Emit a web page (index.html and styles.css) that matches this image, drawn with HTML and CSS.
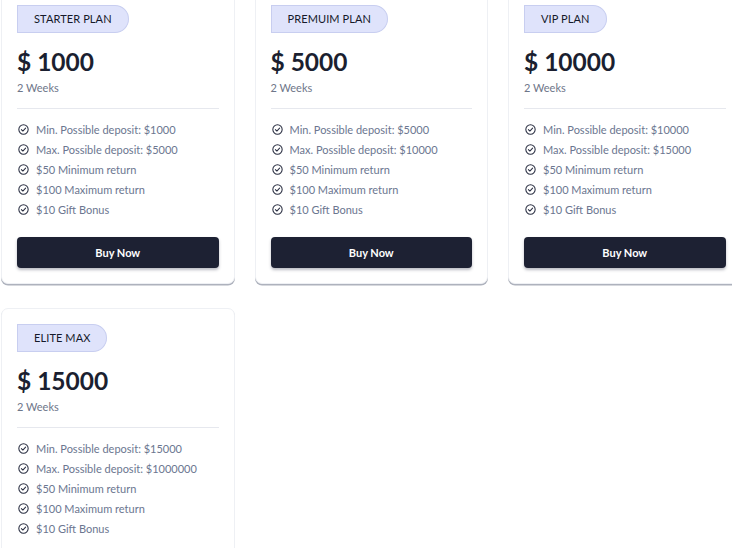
FILE: index.html
```html
<!DOCTYPE html>
<html lang="en">
<head>
<meta charset="utf-8">
<title>Plans</title>
<link rel="stylesheet" href="styles.css">
</head>
<body>
<div class="plans">
  <div class="card">
    <div class="badge">STARTER PLAN</div>
    <div class="price">$ 1000</div>
    <div class="period">2 Weeks</div>
    <hr class="divider">
    <ul class="features">
      <li><svg class="check" viewBox="0 0 12 12"><circle cx="6" cy="6" r="5.1"/><path d="M3.7 6.1l1.6 1.6 3-3.2"/></svg>Min. Possible deposit: $1000</li>
      <li><svg class="check" viewBox="0 0 12 12"><circle cx="6" cy="6" r="5.1"/><path d="M3.7 6.1l1.6 1.6 3-3.2"/></svg>Max. Possible deposit: $5000</li>
      <li><svg class="check" viewBox="0 0 12 12"><circle cx="6" cy="6" r="5.1"/><path d="M3.7 6.1l1.6 1.6 3-3.2"/></svg>$50 Minimum return</li>
      <li><svg class="check" viewBox="0 0 12 12"><circle cx="6" cy="6" r="5.1"/><path d="M3.7 6.1l1.6 1.6 3-3.2"/></svg>$100 Maximum return</li>
      <li><svg class="check" viewBox="0 0 12 12"><circle cx="6" cy="6" r="5.1"/><path d="M3.7 6.1l1.6 1.6 3-3.2"/></svg>$10 Gift Bonus</li>
    </ul>
    <button class="buy">Buy Now</button>
  </div>
  <div class="card">
    <div class="badge">PREMUIM PLAN</div>
    <div class="price">$ 5000</div>
    <div class="period">2 Weeks</div>
    <hr class="divider">
    <ul class="features">
      <li><svg class="check" viewBox="0 0 12 12"><circle cx="6" cy="6" r="5.1"/><path d="M3.7 6.1l1.6 1.6 3-3.2"/></svg>Min. Possible deposit: $5000</li>
      <li><svg class="check" viewBox="0 0 12 12"><circle cx="6" cy="6" r="5.1"/><path d="M3.7 6.1l1.6 1.6 3-3.2"/></svg>Max. Possible deposit: $10000</li>
      <li><svg class="check" viewBox="0 0 12 12"><circle cx="6" cy="6" r="5.1"/><path d="M3.7 6.1l1.6 1.6 3-3.2"/></svg>$50 Minimum return</li>
      <li><svg class="check" viewBox="0 0 12 12"><circle cx="6" cy="6" r="5.1"/><path d="M3.7 6.1l1.6 1.6 3-3.2"/></svg>$100 Maximum return</li>
      <li><svg class="check" viewBox="0 0 12 12"><circle cx="6" cy="6" r="5.1"/><path d="M3.7 6.1l1.6 1.6 3-3.2"/></svg>$10 Gift Bonus</li>
    </ul>
    <button class="buy">Buy Now</button>
  </div>
  <div class="card">
    <div class="badge">VIP PLAN</div>
    <div class="price">$ 10000</div>
    <div class="period">2 Weeks</div>
    <hr class="divider">
    <ul class="features">
      <li><svg class="check" viewBox="0 0 12 12"><circle cx="6" cy="6" r="5.1"/><path d="M3.7 6.1l1.6 1.6 3-3.2"/></svg>Min. Possible deposit: $10000</li>
      <li><svg class="check" viewBox="0 0 12 12"><circle cx="6" cy="6" r="5.1"/><path d="M3.7 6.1l1.6 1.6 3-3.2"/></svg>Max. Possible deposit: $15000</li>
      <li><svg class="check" viewBox="0 0 12 12"><circle cx="6" cy="6" r="5.1"/><path d="M3.7 6.1l1.6 1.6 3-3.2"/></svg>$50 Minimum return</li>
      <li><svg class="check" viewBox="0 0 12 12"><circle cx="6" cy="6" r="5.1"/><path d="M3.7 6.1l1.6 1.6 3-3.2"/></svg>$100 Maximum return</li>
      <li><svg class="check" viewBox="0 0 12 12"><circle cx="6" cy="6" r="5.1"/><path d="M3.7 6.1l1.6 1.6 3-3.2"/></svg>$10 Gift Bonus</li>
    </ul>
    <button class="buy">Buy Now</button>
  </div>
  <div class="card">
    <div class="badge">ELITE MAX</div>
    <div class="price">$ 15000</div>
    <div class="period">2 Weeks</div>
    <hr class="divider">
    <ul class="features">
      <li><svg class="check" viewBox="0 0 12 12"><circle cx="6" cy="6" r="5.1"/><path d="M3.7 6.1l1.6 1.6 3-3.2"/></svg>Min. Possible deposit: $15000</li>
      <li><svg class="check" viewBox="0 0 12 12"><circle cx="6" cy="6" r="5.1"/><path d="M3.7 6.1l1.6 1.6 3-3.2"/></svg>Max. Possible deposit: $1000000</li>
      <li><svg class="check" viewBox="0 0 12 12"><circle cx="6" cy="6" r="5.1"/><path d="M3.7 6.1l1.6 1.6 3-3.2"/></svg>$50 Minimum return</li>
      <li><svg class="check" viewBox="0 0 12 12"><circle cx="6" cy="6" r="5.1"/><path d="M3.7 6.1l1.6 1.6 3-3.2"/></svg>$100 Maximum return</li>
      <li><svg class="check" viewBox="0 0 12 12"><circle cx="6" cy="6" r="5.1"/><path d="M3.7 6.1l1.6 1.6 3-3.2"/></svg>$10 Gift Bonus</li>
    </ul>
    <button class="buy">Buy Now</button>
  </div>
</div>
</body>
</html>
```
FILE: styles.css
```css
html, body {
  margin: 0;
  padding: 0;
  background: #ffffff;
  overflow: hidden;
}
body {
  font-family: "Lato", "Noto Sans", "Liberation Sans", sans-serif;
  color: #1d2133;
}
.plans {
  display: grid;
  grid-template-columns: repeat(3, 233.5px);
  column-gap: 20px;
  row-gap: 24px;
  margin-top: -11px;
  margin-left: 1px;
}
.card {
  box-sizing: border-box;
  background: #fff;
  border: 1px solid #eef0f4;
  border-radius: 7px;
  padding: 15px 15px 15px;
  box-shadow: 0 1.5px 0.5px rgba(120, 126, 145, 0.6);
  display: flex;
  flex-direction: column;
}
.badge {
  align-self: flex-start;
  box-sizing: border-box;
  height: 28px;
  line-height: 26px;
  padding: 0 16px;
  background: #dfe3fb;
  border: 1px solid #c8cef0;
  border-radius: 9px 999px 999px 0;
  font-size: 11px;
  letter-spacing: 0.1px;
  color: #15192a;
}
.price {
  margin-top: 13px;
  font-size: 24.5px;
  line-height: 32px;
  font-weight: 700;
  color: #1b1f30;
}
.period {
  margin-top: 2px;
  font-size: 11px;
  line-height: 16px;
  color: #6e7689;
}
.divider {
  margin: 12px 0 0;
  border: 0;
  border-top: 1px solid #e6e8ee;
  height: 0;
}
.features {
  list-style: none;
  margin: 10px 0 0;
  padding: 0;
}
.features li {
  display: flex;
  align-items: center;
  height: 20px;
  font-size: 11px;
  color: #6b7690;
}
.check {
  width: 11px;
  height: 11px;
  margin: 0 7px 0 1px;
  fill: none;
  stroke: #2a2f42;
  stroke-width: 1.15;
  stroke-linecap: round;
  stroke-linejoin: round;
  flex: none;
}
.buy {
  margin-top: 18px;
  height: 31px;
  border: 0;
  border-radius: 4px;
  background: #1d2133;
  color: #fff;
  font-family: inherit;
  font-size: 11px;
  font-weight: 700;
  box-shadow: 0 2px 3px rgba(30, 34, 55, 0.3);
}
```
